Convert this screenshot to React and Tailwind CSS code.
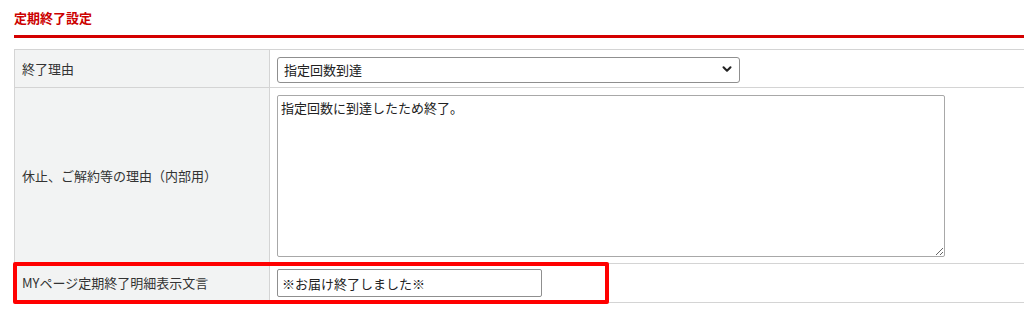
import { ChevronDown } from "lucide-react";

const font = { fontFamily: '"Noto Sans CJK JP", "Noto Sans", sans-serif' };

const Row = ({ label, className, children }) => (
  <div className={`flex border-b border-[#d4d4d4] ${className}`}>
    <div className="w-[255px] shrink-0 flex items-center pl-[7px] bg-[#f2f3f3] border-r border-[#d4d4d4] text-[13px] text-[#333]">
      {label}
    </div>
    <div className="flex-1 flex pl-[7px]">{children}</div>
  </div>
);

const App = () => {
  return (
    <div className="w-[1024px] h-[315px] bg-white pl-[14px] overflow-hidden" style={font}>
      <div className="h-[38px] pt-[8px] border-b-[3px] border-[#d40000]">
        <h2 className="text-[13px] font-bold text-[#cc0000] leading-[20px]">定期終了設定</h2>
      </div>
      <div className="mt-[11px] border-t border-l border-[#d4d4d4]">
        <Row label="終了理由" className="h-[38px]">
          <div className="relative mt-[6px] w-[463px] h-[26px]">
            <select
              defaultValue="1"
              className="appearance-none w-full h-full rounded-[3px] border border-[#8f8f8f] bg-white pl-[6px] text-[13px] text-[#222] outline-none"
              style={font}
            >
              <option value="1">指定回数到達</option>
            </select>
            <ChevronDown
              size={14}
              strokeWidth={3.5}
              className="absolute right-[6px] top-[6px] text-[#222] pointer-events-none"
            />
          </div>
        </Row>
        <Row label="休止、ご解約等の理由（内部用）" className="h-[176px]">
          <textarea
            defaultValue="指定回数に到達したため終了。"
            className="mt-[7px] w-[668px] h-[162px] border border-[#a8a8a8] rounded-[2px] px-[3px] py-[2px] text-[13px] text-[#222] outline-none"
            style={font}
          />
        </Row>
        <div className="relative">
          <Row label="MYページ定期終了明細表示文言" className="h-[39px]">
            <input
              defaultValue="※お届け終了しました※"
              className="mt-[5px] w-[265px] h-[28px] border border-[#8f8f8f] rounded-[2px] px-[4px] text-[13px] text-[#222] outline-none"
              style={font}
            />
          </Row>
          <div className="absolute left-[-2px] top-[-2px] w-[596px] h-[42px] border-4 border-[#ff0000] rounded-[2px] pointer-events-none" />
        </div>
      </div>
    </div>
  );
};

export default App;
